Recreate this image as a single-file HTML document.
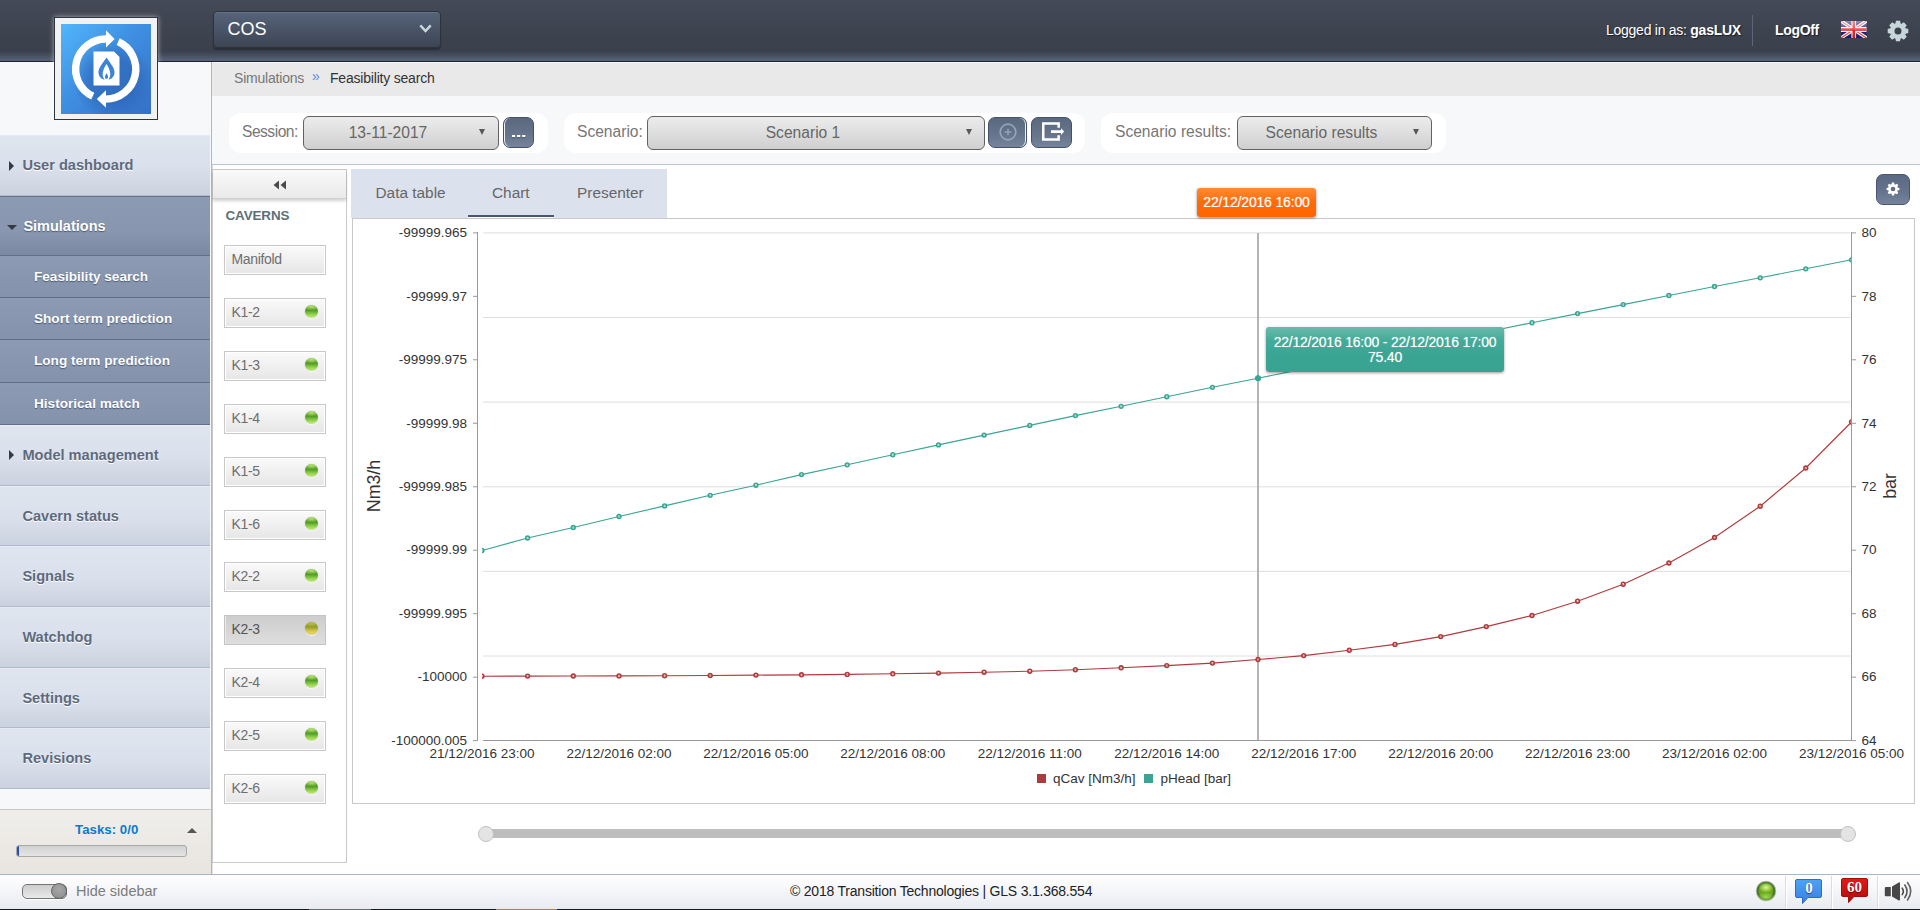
<!DOCTYPE html>
<html><head><meta charset="utf-8"><title>COS</title>
<style>
*{box-sizing:border-box;margin:0;padding:0}
html,body{width:1920px;height:910px;overflow:hidden;background:#fff;font-family:"Liberation Sans",sans-serif;color:#333}
.abs{position:absolute}
#hdr{position:absolute;left:0;top:0;width:1920px;height:62px;background:linear-gradient(#444a57 0,#3c424e 55%,#3a404c 84%,#56637a 100%);border-bottom:1px solid #1d222d}
#cos{position:absolute;left:213px;top:11px;width:228px;height:37px;border-radius:4px;border:1px solid #2d323d;background:linear-gradient(#56637a,#3d4554);box-shadow:0 2px 1px rgba(0,0,0,.28),inset 0 1px 0 rgba(255,255,255,.1);color:#fff;font-size:18px;line-height:34px;padding-left:13.5px}
#side{position:absolute;left:0;top:62px;width:211px;height:813px;background:#f7f8fa}
#sideb{position:absolute;left:211px;top:62px;width:1px;height:813px;background:#adb8cb;box-shadow:1px 0 0 rgba(190,190,190,.45)}
.mi{position:absolute;left:0;width:210px;font-weight:bold;font-size:14.6px;white-space:nowrap}
.mi span{position:absolute;left:22.4px;top:0}
.mi.main{background:linear-gradient(#dfe5ef,#dbe1ec 50%,#cbd2df);border-bottom:1px solid #b1bbcb;border-top:1px solid #e5eaf3;color:#5d6a7e;text-shadow:0 1px 0 #fff}
.mi.act{background:linear-gradient(#8b99b3,#8896af 60%,#7b89a3);border-bottom:1px solid #5f6e89;color:#fff;text-shadow:0 1px 1px #4c5a75;font-size:14.5px;border-top:1px solid #64728c}
.mi.act span{left:23.4px}
.mi.sub{background:linear-gradient(#8c9ab3,#8492ab);border-bottom:1px solid #5f6e89;color:#fff;text-shadow:0 1px 1px #4c5a75;font-size:13.6px}
.mi.sub span{left:34px}
.mi i.ar{position:absolute;left:9px;top:50%;margin-top:-5px;border-left:5px solid #333a45;border-top:5px solid transparent;border-bottom:5px solid transparent}
.mi i.ad{position:absolute;left:7px;top:50%;margin-top:-1px;border-top:5.4px solid #333a45;border-left:5px solid transparent;border-right:5px solid transparent}
#tasks{position:absolute;left:0;top:809px;width:211px;height:66px;background:linear-gradient(#f0eeeb,#e8e5e0);border-top:1px solid #c9c9c9}
#foot{position:absolute;left:0;top:874px;width:1920px;height:35px;background:linear-gradient(#fff,#f4f5f8 50%,#e9ebf0);border-top:1px solid #a9b5cd}
#bline{position:absolute;left:0;top:909px;width:1920px;height:1px;background:#15181d}
#bc{position:absolute;left:212px;top:62px;width:1708px;height:34px;background:#e9e9e9;font-size:14px;line-height:31px;letter-spacing:-.2px;border-top:1px solid #f6f6f6}
#tb{position:absolute;left:212px;top:96px;width:1708px;height:69px;background:#f7f8fa;border-bottom:1px solid #bcc5d8}
.grp{position:absolute;top:113px;height:40px;background:#fff;border-radius:12px}
.lbl{position:absolute;top:122px;font-size:15.6px;color:#777;white-space:nowrap;line-height:20px}
.sel{position:absolute;top:116px;height:34px;border:1px solid #626262;border-radius:6px;background:linear-gradient(#ececec,#dedede 50%,#cfcfcf);font-size:15.6px;color:#666;text-align:center;line-height:32px;white-space:nowrap}
.sel u{position:absolute;top:12px;border-top:6.5px solid #585858;border-left:3.7px solid transparent;border-right:3.7px solid transparent}
.btn{position:absolute;top:117px;height:31px;border-radius:7px;background:linear-gradient(#5b697f,#66748b 55%,#75839b);border:1px solid #3f5070}
#cavp{position:absolute;left:212px;top:169px;width:135px;height:694px;border:1px solid #c9c9c9;background:#fff}
#cavh{position:absolute;left:213px;top:170px;width:133px;height:29px;background:linear-gradient(#fafafa,#e9e9e9);border-bottom:1px solid #cfcfcf;box-shadow:0 2px 3px rgba(0,0,0,.18)}
.cv{position:absolute;left:224px;width:102px;height:30px;border:1px solid #c8c8c8;box-shadow:inset 0 0 0 1px #fff;background:linear-gradient(#fafafa,#e6e6e6);font-size:14px;letter-spacing:-.35px;color:#6e6e6e;line-height:26px;padding-left:6.5px;white-space:nowrap}
.cv.on{border:1px solid #c4c4c4;background:linear-gradient(#cdcdcd,#dedede);box-shadow:inset 1px 0 0 #e8e8e8;color:#555}
.led{position:absolute;left:80px;top:5.5px;width:13px;height:13px;border-radius:50%;box-shadow:0 1px 1px rgba(255,255,255,.9),0 0 1px rgba(80,60,90,.6)}
.led.g{background:radial-gradient(ellipse 60% 30% at 50% 12%,#b6e26c 0,rgba(182,226,108,0) 100%),linear-gradient(#6cb337 0,#4f9a24 40%,#8fcf4c 70%,#c8ee7a 100%)}
.led.y{background:radial-gradient(ellipse 60% 30% at 50% 12%,#b8c040 0,rgba(184,192,64,0) 100%),linear-gradient(#9aa52a 0,#8c9a20 35%,#d8c850 70%,#f2d478 100%)}
#tabs{position:absolute;left:351px;top:169px;width:316px;height:49px;background:#dce2ed;font-size:15.4px;color:#666;line-height:47px}
#tabs span{position:absolute;top:0;white-space:nowrap}
#chartbox{position:absolute;left:352px;top:218px;width:1563px;height:586px;border:1px solid #c8c8c8;background:#fff}
.ax{font-family:"Liberation Sans",sans-serif;font-size:13.5px;fill:#333}
.axt{font-family:"Liberation Sans",sans-serif;font-size:17.8px;fill:#333}
#otip{position:absolute;left:1197px;top:188px;width:119px;height:29px;border-radius:3px;background:linear-gradient(#ff8b32,#ff6a06 50%,#fe6500);box-shadow:0 1px 3px rgba(0,0,0,.45);color:#fff;font-size:14px;line-height:28px;text-align:center;white-space:nowrap;letter-spacing:-.17px;text-shadow:0 0 1px rgba(255,255,255,.6)}
#ttip{position:absolute;left:1266px;top:327px;width:238px;height:45px;border-radius:3px;background:linear-gradient(#69baab 0,#45ab99 30%,#3aa593 60%,#39a391);box-shadow:0 1px 3px rgba(0,0,0,.4);color:#fff;font-size:14px;line-height:15.4px;text-align:center;padding-top:8px;white-space:nowrap;letter-spacing:-.22px;text-shadow:0 0 1px rgba(255,255,255,.5)}
#gearb{position:absolute;left:1876px;top:174px;width:34px;height:31px;border-radius:7px;background:linear-gradient(#5b6883,#67748e 60%,#76839c);border:1px solid #4a5670}
</style></head>
<body>
<div id="hdr"></div>
<div id="cos">COS<svg class="abs" style="left:205px;top:12px" width="13" height="10" viewBox="0 0 13 10"><path d="M1.3 1.3 L6.5 7 L11.7 1.3" fill="none" stroke="#c9d6da" stroke-width="2.5"/></svg></div>

<!-- header right -->
<div class="abs" style="left:1606px;top:21px;font-size:14px;color:#fff;white-space:nowrap;line-height:18px;letter-spacing:-.26px;text-shadow:1px 1px 1px rgba(0,0,0,.55)">Logged in as: <b>gasLUX</b></div>
<div class="abs" style="left:1752px;top:15px;width:1px;height:31px;background:#5b6679"></div>
<div class="abs" style="left:1775px;top:21px;font-size:14px;color:#fff;font-weight:bold;white-space:nowrap;line-height:18px;letter-spacing:-.33px;text-shadow:1px 1px 1px rgba(0,0,0,.55)">LogOff</div>
<svg class="abs" style="left:1841px;top:21px" width="25.5" height="17" viewBox="0 0 60 36" preserveAspectRatio="none">
<defs><linearGradient id="fg" x1="0" y1="0" x2="0" y2="1"><stop offset="0" stop-color="#fff" stop-opacity=".5"/><stop offset=".5" stop-color="#fff" stop-opacity=".22"/><stop offset=".52" stop-color="#fff" stop-opacity="0"/><stop offset="1" stop-color="#000" stop-opacity=".12"/></linearGradient></defs>
<rect width="60" height="36" fill="#1a1c78"/>
<path d="M0 0L60 36M60 0L0 36" stroke="#fff" stroke-width="7.5"/>
<path d="M0 0L60 36M60 0L0 36" stroke="#e4504c" stroke-width="2.6"/>
<path d="M30 0V36M0 18H60" stroke="#fff" stroke-width="11"/>
<path d="M30 0V36" stroke="#e0201c" stroke-width="6"/><path d="M0 18H60" stroke="#e0201c" stroke-width="5.4"/>
<rect width="60" height="36" fill="url(#fg)"/>
</svg>
<svg class="abs" style="left:1887px;top:19.7px" width="22" height="22" viewBox="-11 -11 22 22">
<g fill="#c6d6da"><circle r="7.7"/>
<g id="t"><path d="M-2.9 -6.8 L-2 -10.3 H2 L2.9 -6.800 Z"/></g>
<use href="#t" transform="rotate(45)"/><use href="#t" transform="rotate(90)"/><use href="#t" transform="rotate(135)"/><use href="#t" transform="rotate(180)"/><use href="#t" transform="rotate(225)"/><use href="#t" transform="rotate(270)"/><use href="#t" transform="rotate(315)"/></g>
<circle r="3.5" fill="#3c424e"/></svg>

<!-- sidebar -->
<div id="side"></div><div id="sideb"></div>
<div class="mi main" style="top:135.2px;height:60.8px;line-height:59.8px"><i class="ar"></i><span>User dashboard</span></div>
<div class="mi act" style="top:196.0px;height:59.6px;line-height:58.6px"><i class="ad"></i><span>Simulations</span></div>
<div class="mi sub" style="top:255.6px;height:42.4px;line-height:41.4px"><span>Feasibility search</span></div>
<div class="mi sub" style="top:297.9px;height:42.4px;line-height:41.4px"><span>Short term prediction</span></div>
<div class="mi sub" style="top:340.3px;height:42.4px;line-height:41.4px"><span>Long term prediction</span></div>
<div class="mi sub" style="top:382.7px;height:42.4px;line-height:41.4px"><span>Historical match</span></div>
<div class="mi main" style="top:425.0px;height:60.7px;line-height:59.7px"><i class="ar"></i><span>Model management</span></div>
<div class="mi main" style="top:485.7px;height:60.7px;line-height:59.7px"><span>Cavern status</span></div>
<div class="mi main" style="top:546.3px;height:60.7px;line-height:59.7px"><span>Signals</span></div>
<div class="mi main" style="top:607.0px;height:60.7px;line-height:59.7px"><span>Watchdog</span></div>
<div class="mi main" style="top:667.7px;height:60.7px;line-height:59.7px"><span>Settings</span></div>
<div class="mi main" style="top:728.3px;height:60.7px;line-height:59.7px"><span>Revisions</span></div>
<div id="tasks">
 <div class="abs" style="left:75px;top:12px;font-size:13.2px;font-weight:bold;color:#0b7cc9;line-height:16px;white-space:nowrap;letter-spacing:.05px">Tasks: 0/0</div>
 <div class="abs" style="left:187px;top:18px;border-bottom:5.5px solid #555;border-left:5.5px solid transparent;border-right:5.5px solid transparent"></div>
 <div class="abs" style="left:16px;top:35px;width:171px;height:12px;border:1px solid #a8a8a8;border-radius:3px;background:linear-gradient(#d2d2d2,#e4e4e4);overflow:hidden"><div style="width:2px;height:100%;background:#2a4fb0"></div></div>
</div>

<!-- logo -->
<div class="abs" style="left:54px;top:17px;width:104px;height:103px;background:#f2f2f2;border:1px solid #2f3542;box-shadow:0 0 5px rgba(255,255,255,.55)"></div>
<svg class="abs" style="left:61px;top:24px" width="90" height="90" viewBox="0 0 90 90">
<defs><linearGradient id="lg" x1="0" y1="0" x2="1" y2="1"><stop offset="0" stop-color="#52b6fa"/><stop offset=".45" stop-color="#3f8fe2"/><stop offset="1" stop-color="#3570c8"/></linearGradient>
<radialGradient id="rg" cx=".5" cy=".52" r=".5"><stop offset=".55" stop-color="#2a5fae" stop-opacity=".55"/><stop offset="1" stop-color="#2a5fae" stop-opacity="0"/></radialGradient></defs>
<rect width="90" height="90" fill="url(#lg)"/>
<circle cx="52" cy="55" r="40" fill="url(#rg)"/>
<g fill="none" stroke="#fff" stroke-width="7.4">
<path d="M31.8 72.2 A30.05 30.05 0 0 1 45.2 15"/>
<path d="M57.2 17.7 A30.05 30.05 0 0 1 44.8 75.1"/>
</g>
<path d="M45 6.2 L53.6 14.9 L45 23.5 Z" fill="#fff"/>
<path d="M45 66.2 L35.8 75 L45 83.8 Z" fill="#fff"/>
<path d="M32.5 27.5 H53 L58.5 33 V61.5 H32.5 Z" fill="#fff"/>
<path d="M45.5 33.5 C49 39 54 44 53.5 49 C53 53.5 49.5 55.5 47.5 55.5 C50.6 51.5 49.6 46.5 45.5 40 C41.4 46.5 40.4 51.5 43.5 55.5 C41.5 55.5 38 53.5 37.5 49 C37 44 42 39 45.5 33.5 Z" fill="#3a84d8"/>
<path d="M45.5 49.3 C46.6 51 47.2 52.3 47 53.6 C46.8 54.6 46 54.9 45.5 54.9 C45 54.9 44.2 54.6 44 53.6 C43.800 52.3 44.4 51 45.5 49.3Z" fill="#3a84d8"/>
</svg>

<!-- breadcrumb -->
<div id="bc"><span class="abs" style="left:22px;color:#777">Simulations</span><span class="abs" style="left:100px;color:#5f86e0;font-size:14px;top:-2px">»</span><span class="abs" style="left:118px;color:#333">Feasibility search</span></div>
<div id="tb"></div>

<!-- toolbar groups -->
<div class="grp" style="left:229px;width:319px"></div>
<div class="lbl" style="left:242px;letter-spacing:-.5px">Session:</div>
<div class="sel" style="left:303px;width:196px"><span style="position:relative;left:-13px">13-11-2017</span><u style="left:175.3px"></u></div>
<div class="btn" style="left:503px;width:31px;box-shadow:inset 1px 0 0 rgba(255,255,255,.9)"><svg class="abs" style="left:8px;top:17px" width="15" height="4"><g fill="#2f3d58"><rect x="0" y="1" width="3.2" height="2.2"/><rect x="5.1" y="1" width="3.2" height="2.2"/><rect x="10.2" y="1" width="3.2" height="2.2"/></g><g fill="#fff"><rect x="0" width="3.2" height="2.2"/><rect x="5.1" width="3.2" height="2.2"/><rect x="10.2" width="3.2" height="2.2"/></g></svg></div>

<div class="grp" style="left:564px;width:521px"></div>
<div class="lbl" style="left:577px">Scenario:</div>
<div class="sel" style="left:647px;width:338px"><span style="position:relative;left:-13px">Scenario 1</span><u style="left:318.3px"></u></div>
<div class="btn" style="left:988px;width:39px;box-shadow:inset -1px 0 0 rgba(255,255,255,.9)"><svg class="abs" style="left:8.800px;top:3.500px" width="20" height="20" viewBox="0 0 20 20"><circle cx="10" cy="10" r="7.8" fill="none" stroke="#97a3b9" stroke-width="1.7"/><path d="M10 6.700V13.300M6.7 10H13.3" stroke="#97a3b9" stroke-width="1.35"/></svg></div>
<div class="btn" style="left:1031px;width:41px"><svg class="abs" style="left:9px;top:4px" width="24" height="22" viewBox="0 0 24 22"><path d="M17.650 5.800V1.550H2.250V17.450H17.650V13.2" fill="none" stroke="#fff" stroke-width="2.5"/><path d="M10 8.300H20V6.300L23.2 9.600L20 12.900V10.900H10Z" fill="#fff"/></svg></div>

<div class="grp" style="left:1101px;width:345px"></div>
<div class="lbl" style="left:1115px">Scenario results:</div>
<div class="sel" style="left:1237px;width:195px"><span style="position:relative;left:-13px">Scenario results</span><u style="left:175.3px"></u></div>

<!-- caverns -->
<div id="cavp"></div>
<div id="cavh"><svg class="abs" style="left:60px;top:10px" width="14" height="10" viewBox="0 0 14 10"><path d="M6 0.5V9.5L0.5 5Z M13 0.5V9.5L7.5 5Z" fill="#4a4a4a"/></svg></div>
<div class="abs" style="left:225.5px;top:208px;font-size:13.4px;font-weight:bold;color:#5b7078;line-height:15px;letter-spacing:-.1px">CAVERNS</div>
<div class="cv" style="top:245px">Manifold</div>
<div class="cv" style="top:298px">K1-2<b class="led g"></b></div>
<div class="cv" style="top:351px">K1-3<b class="led g"></b></div>
<div class="cv" style="top:404px">K1-4<b class="led g"></b></div>
<div class="cv" style="top:457px">K1-5<b class="led g"></b></div>
<div class="cv" style="top:510px">K1-6<b class="led g"></b></div>
<div class="cv" style="top:562px">K2-2<b class="led g"></b></div>
<div class="cv on" style="top:615px">K2-3<b class="led y"></b></div>
<div class="cv" style="top:668px">K2-4<b class="led g"></b></div>
<div class="cv" style="top:721px">K2-5<b class="led g"></b></div>
<div class="cv" style="top:774px">K2-6<b class="led g"></b></div>

<!-- tabs -->
<div id="tabs"><span style="left:24.5px">Data table</span><span style="left:141px">Chart</span><span style="left:226px">Presenter</span>
<div class="abs" style="left:117px;top:46px;width:86px;height:2px;background:#475672"></div><div class="abs" style="left:117px;top:48px;width:86px;height:1px;background:#fff"></div></div>
<div id="chartbox"></div>
<div id="gearb"><svg class="abs" style="left:8.2px;top:6.2px" width="16" height="16" viewBox="-8 -8 16 16"><g fill="#fff"><circle r="4.8"/><g id="t2"><path d="M-1.6 -4 L-1.1 -6.4 H1.1 L1.6 -4 Z"/></g><use href="#t2" transform="rotate(45)"/><use href="#t2" transform="rotate(90)"/><use href="#t2" transform="rotate(135)"/><use href="#t2" transform="rotate(180)"/><use href="#t2" transform="rotate(225)"/><use href="#t2" transform="rotate(270)"/><use href="#t2" transform="rotate(315)"/></g><circle r="2.3" fill="#606d88"/></svg></div>

<svg class="abs" style="left:0;top:0" width="1920" height="910" viewBox="0 0 1920 910">
<defs><clipPath id="cp"><rect x="482" y="225" width="1369.2" height="520"/></clipPath></defs>
<line x1="483" x2="1850" y1="232.9" y2="232.9" stroke="#dedede" stroke-width="1"/>
<line x1="483" x2="1850" y1="317.5" y2="317.5" stroke="#dedede" stroke-width="1"/>
<line x1="483" x2="1850" y1="402.1" y2="402.1" stroke="#dedede" stroke-width="1"/>
<line x1="483" x2="1850" y1="486.8" y2="486.8" stroke="#dedede" stroke-width="1"/>
<line x1="483" x2="1850" y1="571.4" y2="571.4" stroke="#dedede" stroke-width="1"/>
<line x1="483" x2="1850" y1="656.0" y2="656.0" stroke="#dedede" stroke-width="1"/>
<rect x="477" y="232" width="1" height="509" fill="#999"/>
<rect x="1851" y="232" width="1" height="509" fill="#999"/>
<rect x="483" y="740" width="1368" height="1" fill="#999"/>
<line x1="473" x2="477" y1="232.88" y2="232.88" stroke="#999" stroke-width="1"/>
<line x1="1852" x2="1856" y1="232.88" y2="232.88" stroke="#999" stroke-width="1"/>
<line x1="473" x2="477" y1="296.35" y2="296.35" stroke="#999" stroke-width="1"/>
<line x1="1852" x2="1856" y1="296.35" y2="296.35" stroke="#999" stroke-width="1"/>
<line x1="473" x2="477" y1="359.81" y2="359.81" stroke="#999" stroke-width="1"/>
<line x1="1852" x2="1856" y1="359.81" y2="359.81" stroke="#999" stroke-width="1"/>
<line x1="473" x2="477" y1="423.28" y2="423.28" stroke="#999" stroke-width="1"/>
<line x1="1852" x2="1856" y1="423.28" y2="423.28" stroke="#999" stroke-width="1"/>
<line x1="473" x2="477" y1="486.75" y2="486.75" stroke="#999" stroke-width="1"/>
<line x1="1852" x2="1856" y1="486.75" y2="486.75" stroke="#999" stroke-width="1"/>
<line x1="473" x2="477" y1="550.23" y2="550.23" stroke="#999" stroke-width="1"/>
<line x1="1852" x2="1856" y1="550.23" y2="550.23" stroke="#999" stroke-width="1"/>
<line x1="473" x2="477" y1="613.69" y2="613.69" stroke="#999" stroke-width="1"/>
<line x1="1852" x2="1856" y1="613.69" y2="613.69" stroke="#999" stroke-width="1"/>
<line x1="473" x2="477" y1="677.16" y2="677.16" stroke="#999" stroke-width="1"/>
<line x1="1852" x2="1856" y1="677.16" y2="677.16" stroke="#999" stroke-width="1"/>
<line x1="473" x2="477" y1="740.63" y2="740.63" stroke="#999" stroke-width="1"/>
<line x1="1852" x2="1856" y1="740.63" y2="740.63" stroke="#999" stroke-width="1"/>
<rect x="1257.1" y="233" width="1.8" height="507" fill="#adadad"/>
<g clip-path="url(#cp)">
<polyline points="482.0,676.2 527.6,676.1 573.3,676.0 619.0,675.9 664.6,675.7 710.2,675.5 755.9,675.1 801.5,674.8 847.2,674.4 892.8,673.8 938.5,673.1 984.1,672.2 1029.8,671.2 1075.4,669.7 1121.1,667.8 1166.8,665.6 1212.4,663.1 1258.0,659.5 1303.7,655.6 1349.3,650.3 1395.0,644.4 1440.7,636.6 1486.3,626.6 1532.0,615.5 1577.6,601.2 1623.2,584.2 1668.9,563.0 1714.5,537.5 1760.2,506.2 1805.8,468.0 1851.5,422.0" fill="none" stroke="#b03a3c" stroke-width="1.15"/>
<circle cx="482.0" cy="676.2" r="1.9" fill="#fff" fill-opacity="0.45" stroke="#b03a3c" stroke-width="1.55"/><circle cx="527.6" cy="676.1" r="1.9" fill="#fff" fill-opacity="0.45" stroke="#b03a3c" stroke-width="1.55"/><circle cx="573.3" cy="676.0" r="1.9" fill="#fff" fill-opacity="0.45" stroke="#b03a3c" stroke-width="1.55"/><circle cx="619.0" cy="675.9" r="1.9" fill="#fff" fill-opacity="0.45" stroke="#b03a3c" stroke-width="1.55"/><circle cx="664.6" cy="675.7" r="1.9" fill="#fff" fill-opacity="0.45" stroke="#b03a3c" stroke-width="1.55"/><circle cx="710.2" cy="675.5" r="1.9" fill="#fff" fill-opacity="0.45" stroke="#b03a3c" stroke-width="1.55"/><circle cx="755.9" cy="675.1" r="1.9" fill="#fff" fill-opacity="0.45" stroke="#b03a3c" stroke-width="1.55"/><circle cx="801.5" cy="674.8" r="1.9" fill="#fff" fill-opacity="0.45" stroke="#b03a3c" stroke-width="1.55"/><circle cx="847.2" cy="674.4" r="1.9" fill="#fff" fill-opacity="0.45" stroke="#b03a3c" stroke-width="1.55"/><circle cx="892.8" cy="673.8" r="1.9" fill="#fff" fill-opacity="0.45" stroke="#b03a3c" stroke-width="1.55"/><circle cx="938.5" cy="673.1" r="1.9" fill="#fff" fill-opacity="0.45" stroke="#b03a3c" stroke-width="1.55"/><circle cx="984.1" cy="672.2" r="1.9" fill="#fff" fill-opacity="0.45" stroke="#b03a3c" stroke-width="1.55"/><circle cx="1029.8" cy="671.2" r="1.9" fill="#fff" fill-opacity="0.45" stroke="#b03a3c" stroke-width="1.55"/><circle cx="1075.4" cy="669.7" r="1.9" fill="#fff" fill-opacity="0.45" stroke="#b03a3c" stroke-width="1.55"/><circle cx="1121.1" cy="667.8" r="1.9" fill="#fff" fill-opacity="0.45" stroke="#b03a3c" stroke-width="1.55"/><circle cx="1166.8" cy="665.6" r="1.9" fill="#fff" fill-opacity="0.45" stroke="#b03a3c" stroke-width="1.55"/><circle cx="1212.4" cy="663.1" r="1.9" fill="#fff" fill-opacity="0.45" stroke="#b03a3c" stroke-width="1.55"/><circle cx="1258.0" cy="659.5" r="1.9" fill="#fff" fill-opacity="0.45" stroke="#b03a3c" stroke-width="1.55"/><circle cx="1303.7" cy="655.6" r="1.9" fill="#fff" fill-opacity="0.45" stroke="#b03a3c" stroke-width="1.55"/><circle cx="1349.3" cy="650.3" r="1.9" fill="#fff" fill-opacity="0.45" stroke="#b03a3c" stroke-width="1.55"/><circle cx="1395.0" cy="644.4" r="1.9" fill="#fff" fill-opacity="0.45" stroke="#b03a3c" stroke-width="1.55"/><circle cx="1440.7" cy="636.6" r="1.9" fill="#fff" fill-opacity="0.45" stroke="#b03a3c" stroke-width="1.55"/><circle cx="1486.3" cy="626.6" r="1.9" fill="#fff" fill-opacity="0.45" stroke="#b03a3c" stroke-width="1.55"/><circle cx="1532.0" cy="615.5" r="1.9" fill="#fff" fill-opacity="0.45" stroke="#b03a3c" stroke-width="1.55"/><circle cx="1577.6" cy="601.2" r="1.9" fill="#fff" fill-opacity="0.45" stroke="#b03a3c" stroke-width="1.55"/><circle cx="1623.2" cy="584.2" r="1.9" fill="#fff" fill-opacity="0.45" stroke="#b03a3c" stroke-width="1.55"/><circle cx="1668.9" cy="563.0" r="1.9" fill="#fff" fill-opacity="0.45" stroke="#b03a3c" stroke-width="1.55"/><circle cx="1714.5" cy="537.5" r="1.9" fill="#fff" fill-opacity="0.45" stroke="#b03a3c" stroke-width="1.55"/><circle cx="1760.2" cy="506.2" r="1.9" fill="#fff" fill-opacity="0.45" stroke="#b03a3c" stroke-width="1.55"/><circle cx="1805.8" cy="468.0" r="1.9" fill="#fff" fill-opacity="0.45" stroke="#b03a3c" stroke-width="1.55"/><circle cx="1851.5" cy="422.0" r="1.9" fill="#fff" fill-opacity="0.45" stroke="#b03a3c" stroke-width="1.55"/>
<polyline points="482.0,550.5 527.6,538.0 573.3,527.5 619.0,516.5 664.6,505.9 710.2,495.3 755.9,485.2 801.5,474.6 847.2,464.8 892.8,454.7 938.5,444.9 984.1,435.1 1029.8,425.4 1075.4,415.6 1121.1,406.3 1166.8,396.7 1212.4,387.3 1258.0,378.2 1303.7,368.9 1349.3,359.7 1395.0,350.5 1440.7,341.2 1486.3,332.0 1532.0,322.7 1577.6,313.6 1623.2,304.6 1668.9,295.5 1714.5,286.5 1760.2,277.8 1805.8,268.8 1851.5,259.8" fill="none" stroke="#3aa592" stroke-width="1.15"/>
<circle cx="482.0" cy="550.5" r="1.9" fill="#fff" fill-opacity="0.45" stroke="#3aa592" stroke-width="1.55"/><circle cx="527.6" cy="538.0" r="1.9" fill="#fff" fill-opacity="0.45" stroke="#3aa592" stroke-width="1.55"/><circle cx="573.3" cy="527.5" r="1.9" fill="#fff" fill-opacity="0.45" stroke="#3aa592" stroke-width="1.55"/><circle cx="619.0" cy="516.5" r="1.9" fill="#fff" fill-opacity="0.45" stroke="#3aa592" stroke-width="1.55"/><circle cx="664.6" cy="505.9" r="1.9" fill="#fff" fill-opacity="0.45" stroke="#3aa592" stroke-width="1.55"/><circle cx="710.2" cy="495.3" r="1.9" fill="#fff" fill-opacity="0.45" stroke="#3aa592" stroke-width="1.55"/><circle cx="755.9" cy="485.2" r="1.9" fill="#fff" fill-opacity="0.45" stroke="#3aa592" stroke-width="1.55"/><circle cx="801.5" cy="474.6" r="1.9" fill="#fff" fill-opacity="0.45" stroke="#3aa592" stroke-width="1.55"/><circle cx="847.2" cy="464.8" r="1.9" fill="#fff" fill-opacity="0.45" stroke="#3aa592" stroke-width="1.55"/><circle cx="892.8" cy="454.7" r="1.9" fill="#fff" fill-opacity="0.45" stroke="#3aa592" stroke-width="1.55"/><circle cx="938.5" cy="444.9" r="1.9" fill="#fff" fill-opacity="0.45" stroke="#3aa592" stroke-width="1.55"/><circle cx="984.1" cy="435.1" r="1.9" fill="#fff" fill-opacity="0.45" stroke="#3aa592" stroke-width="1.55"/><circle cx="1029.8" cy="425.4" r="1.9" fill="#fff" fill-opacity="0.45" stroke="#3aa592" stroke-width="1.55"/><circle cx="1075.4" cy="415.6" r="1.9" fill="#fff" fill-opacity="0.45" stroke="#3aa592" stroke-width="1.55"/><circle cx="1121.1" cy="406.3" r="1.9" fill="#fff" fill-opacity="0.45" stroke="#3aa592" stroke-width="1.55"/><circle cx="1166.8" cy="396.7" r="1.9" fill="#fff" fill-opacity="0.45" stroke="#3aa592" stroke-width="1.55"/><circle cx="1212.4" cy="387.3" r="1.9" fill="#fff" fill-opacity="0.45" stroke="#3aa592" stroke-width="1.55"/><circle cx="1258.0" cy="378.2" r="1.9" fill="#fff" fill-opacity="0.45" stroke="#3aa592" stroke-width="1.55"/><circle cx="1303.7" cy="368.9" r="1.9" fill="#fff" fill-opacity="0.45" stroke="#3aa592" stroke-width="1.55"/><circle cx="1349.3" cy="359.7" r="1.9" fill="#fff" fill-opacity="0.45" stroke="#3aa592" stroke-width="1.55"/><circle cx="1395.0" cy="350.5" r="1.9" fill="#fff" fill-opacity="0.45" stroke="#3aa592" stroke-width="1.55"/><circle cx="1440.7" cy="341.2" r="1.9" fill="#fff" fill-opacity="0.45" stroke="#3aa592" stroke-width="1.55"/><circle cx="1486.3" cy="332.0" r="1.9" fill="#fff" fill-opacity="0.45" stroke="#3aa592" stroke-width="1.55"/><circle cx="1532.0" cy="322.7" r="1.9" fill="#fff" fill-opacity="0.45" stroke="#3aa592" stroke-width="1.55"/><circle cx="1577.6" cy="313.6" r="1.9" fill="#fff" fill-opacity="0.45" stroke="#3aa592" stroke-width="1.55"/><circle cx="1623.2" cy="304.6" r="1.9" fill="#fff" fill-opacity="0.45" stroke="#3aa592" stroke-width="1.55"/><circle cx="1668.9" cy="295.5" r="1.9" fill="#fff" fill-opacity="0.45" stroke="#3aa592" stroke-width="1.55"/><circle cx="1714.5" cy="286.5" r="1.9" fill="#fff" fill-opacity="0.45" stroke="#3aa592" stroke-width="1.55"/><circle cx="1760.2" cy="277.8" r="1.9" fill="#fff" fill-opacity="0.45" stroke="#3aa592" stroke-width="1.55"/><circle cx="1805.8" cy="268.8" r="1.9" fill="#fff" fill-opacity="0.45" stroke="#3aa592" stroke-width="1.55"/><circle cx="1851.5" cy="259.8" r="1.9" fill="#fff" fill-opacity="0.45" stroke="#3aa592" stroke-width="1.55"/>
<circle cx="1258.0" cy="378.2" r="3" fill="#3aa592"/>
</g>
<text x="467" y="237.1" text-anchor="end" class="ax">-99999.965</text>
<text x="1861.5" y="237.1" class="ax">80</text>
<text x="467" y="300.5" text-anchor="end" class="ax">-99999.97</text>
<text x="1861.5" y="300.5" class="ax">78</text>
<text x="467" y="364.0" text-anchor="end" class="ax">-99999.975</text>
<text x="1861.5" y="364.0" class="ax">76</text>
<text x="467" y="427.5" text-anchor="end" class="ax">-99999.98</text>
<text x="1861.5" y="427.5" class="ax">74</text>
<text x="467" y="491.0" text-anchor="end" class="ax">-99999.985</text>
<text x="1861.5" y="491.0" class="ax">72</text>
<text x="467" y="554.4" text-anchor="end" class="ax">-99999.99</text>
<text x="1861.5" y="554.4" class="ax">70</text>
<text x="467" y="617.9" text-anchor="end" class="ax">-99999.995</text>
<text x="1861.5" y="617.9" class="ax">68</text>
<text x="467" y="681.4" text-anchor="end" class="ax">-100000</text>
<text x="1861.5" y="681.4" class="ax">66</text>
<text x="467" y="744.8" text-anchor="end" class="ax">-100000.005</text>
<text x="1861.5" y="744.8" class="ax">64</text>
<text x="482.0" y="757.7" text-anchor="middle" class="ax">21/12/2016 23:00</text>
<text x="619.0" y="757.7" text-anchor="middle" class="ax">22/12/2016 02:00</text>
<text x="755.9" y="757.7" text-anchor="middle" class="ax">22/12/2016 05:00</text>
<text x="892.8" y="757.7" text-anchor="middle" class="ax">22/12/2016 08:00</text>
<text x="1029.8" y="757.7" text-anchor="middle" class="ax">22/12/2016 11:00</text>
<text x="1166.8" y="757.7" text-anchor="middle" class="ax">22/12/2016 14:00</text>
<text x="1303.7" y="757.7" text-anchor="middle" class="ax">22/12/2016 17:00</text>
<text x="1440.7" y="757.7" text-anchor="middle" class="ax">22/12/2016 20:00</text>
<text x="1577.6" y="757.7" text-anchor="middle" class="ax">22/12/2016 23:00</text>
<text x="1714.5" y="757.7" text-anchor="middle" class="ax">23/12/2016 02:00</text>
<text x="1851.5" y="757.7" text-anchor="middle" class="ax">23/12/2016 05:00</text>
<text transform="translate(380,486) rotate(-90)" text-anchor="middle" class="axt">Nm3/h</text>
<text transform="translate(1896,486) rotate(-90)" text-anchor="middle" class="axt">bar</text>
<rect x="1037" y="774" width="9" height="9" fill="#ad3a3d"/>
<text x="1053" y="783.3" class="ax">qCav [Nm3/h]</text>
<rect x="1144" y="774" width="9" height="9" fill="#3aa592"/>
<text x="1160.5" y="783.3" class="ax">pHead [bar]</text>
</svg>

<div id="otip">22/12/2016 16:00</div>
<div id="ttip">22/12/2016 16:00 - 22/12/2016 17:00<br>75.40</div>

<!-- slider -->
<div class="abs" style="left:486px;top:829px;width:1361px;height:9px;background:#bdbdbd"></div>
<div class="abs" style="left:478px;top:826px;width:16px;height:16px;border-radius:50%;background:#e4e4e4;border:1px solid #c2c2c2"></div>
<div class="abs" style="left:1840px;top:826px;width:16px;height:16px;border-radius:50%;background:#e4e4e4;border:1px solid #c2c2c2"></div>

<!-- footer -->
<div id="foot">
 <div class="abs" style="left:22px;top:9px;width:45px;height:15px;border-radius:5px;border:1.5px solid #757575;background:linear-gradient(#cdcdcd,#e9e9e9);box-shadow:0 1px 0 #fff"></div>
 <div class="abs" style="left:51px;top:8px;width:16px;height:16px;border-radius:50%;background:radial-gradient(circle at 50% 35%,#a6a6a6,#8c8c8c);border:1.4px solid #636363"></div>
 <div class="abs" style="left:76px;top:7px;font-size:14.5px;color:#7b7b7b;line-height:18px;white-space:nowrap">Hide sidebar</div>
 <div class="abs" style="left:790px;top:7px;font-size:14px;color:#222;line-height:18px;white-space:nowrap;letter-spacing:-.215px">© 2018 Transition Technologies | GLS 3.1.368.554</div>
 <div class="abs" style="left:1755px;top:5px;width:22px;height:22px;border-radius:50%;background:radial-gradient(ellipse 34% 24% at 50% 34%,rgba(222,255,140,.95),rgba(222,255,140,0)),radial-gradient(ellipse 42% 22% at 50% 78%,rgba(168,224,92,.85),rgba(168,224,92,0)),radial-gradient(circle closest-side at 50% 50%,#6eab20 0,#6aa61e 60%,#4f7c2e 68%,#4c792c 82%,rgba(110,125,105,.5) 88%,rgba(150,150,150,0) 97%)"></div>
 <div class="abs" style="left:1785px;top:1px;width:1px;height:33px;background:#dcdcdc;box-shadow:1px 0 0 #fff"></div>
 <div class="abs" style="left:1831px;top:1px;width:1px;height:33px;background:#dcdcdc;box-shadow:1px 0 0 #fff"></div>
 <div class="abs" style="left:1877px;top:1px;width:1px;height:33px;background:#dcdcdc;box-shadow:1px 0 0 #fff"></div>
 <svg class="abs" style="left:1793px;top:2px" width="32" height="30" viewBox="0 0 32 30"><defs><linearGradient id="bg1" x1="0" y1="0" x2="0" y2="1"><stop offset="0" stop-color="#4ba3f7"/><stop offset="1" stop-color="#3a7fe0"/></linearGradient><linearGradient id="bg2" x1="0" y1="0" x2="0" y2="1"><stop offset="0" stop-color="#e01c1c"/><stop offset="1" stop-color="#b40a0a"/></linearGradient></defs>
 <path d="M4 2.5H27Q28.5 2.5 28.5 4V19Q28.5 20.5 27 20.500H15L9.5 26.500V20.500H4Q2.5 20.5 2.5 19V4Q2.5 2.5 4 2.500Z" fill="url(#bg1)" stroke="#3568c8" stroke-width="1"/>
 <text x="15.9" y="15.8" text-anchor="middle" font-family="Liberation Serif" font-weight="bold" font-size="15" fill="#fff" style="text-shadow:0 1px 1px #1a3a80">0</text></svg>
 <svg class="abs" style="left:1839px;top:1px" width="32" height="30" viewBox="0 0 32 30">
 <path d="M4 2.500H27Q28.5 2.5 28.5 4V19Q28.5 20.5 27 20.500H15L9.5 26.500V20.500H4Q2.5 20.5 2.5 19V4Q2.5 2.5 4 2.500Z" fill="url(#bg2)" stroke="#a80c0c" stroke-width="1"/>
 <text x="15.6" y="16.2" text-anchor="middle" font-family="Liberation Serif" font-weight="bold" font-size="15" fill="#fff" style="text-shadow:0 1px 1px #600">60</text></svg>
 <svg class="abs" style="left:1884px;top:6px" width="32" height="22" viewBox="0 0 32 22"><path d="M1.8 6H6.8V15.2H1.8Q0.8 15.2 0.8 14.2V7Q0.8 6 1.800 6Z M8 5.6L14.8 1.5Q16 0.9 16 2.300V18.600Q16 20 14.8 19.400L8 15.6Z" fill="#474747"/><g fill="none" stroke="#4a4a4a" stroke-width="1.6" stroke-linecap="round"><path d="M18.200 7.2Q20.500 10.400 18.200 13.600"/><path d="M20.800 4Q25.400 10.300 20.800 16.600" stroke-opacity=".92"/><path d="M23.500 1.600Q30 10.300 23.500 19" stroke-opacity=".85"/></g></svg>
</div>
<div id="bline"></div><div class="abs" style="left:309px;top:909px;width:62px;height:1px;background:#5f6f70"></div><div class="abs" style="left:496px;top:909px;width:61px;height:1px;background:#c87830"></div>
</body></html>
